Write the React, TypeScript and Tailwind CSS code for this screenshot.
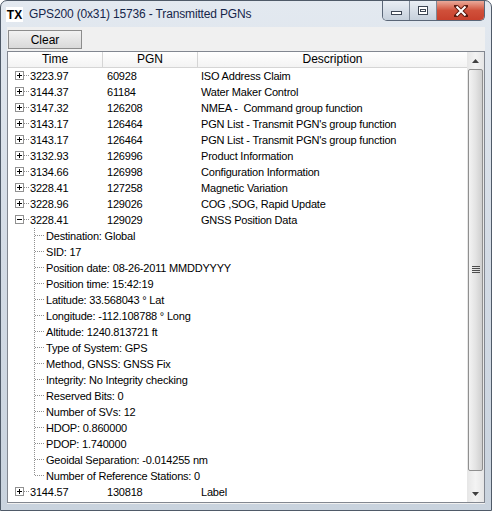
import React from "react";

const rows: [string, string, string][] = [
  ["3223.97", "60928", "ISO Address Claim"],
  ["3144.37", "61184", "Water Maker Control"],
  ["3147.32", "126208", "NMEA -  Command group function"],
  ["3143.17", "126464", "PGN List - Transmit PGN's group function"],
  ["3143.17", "126464", "PGN List - Transmit PGN's group function"],
  ["3132.93", "126996", "Product Information"],
  ["3134.66", "126998", "Configuration Information"],
  ["3228.41", "127258", "Magnetic Variation"],
  ["3228.96", "129026", "COG ,SOG, Rapid Update"],
];

const fields = [
  "Destination: Global",
  "SID: 17",
  "Position date: 08-26-2011 MMDDYYYY",
  "Position time: 15:42:19",
  "Latitude: 33.568043 ° Lat",
  "Longitude: -112.108788 ° Long",
  "Altitude: 1240.813721 ft",
  "Type of System: GPS",
  "Method, GNSS: GNSS Fix",
  "Integrity: No Integrity checking",
  "Reserved Bits: 0",
  "Number of SVs: 12",
  "HDOP: 0.860000",
  "PDOP: 1.740000",
  "Geoidal Separation: -0.014255 nm",
  "Number of Reference Stations: 0",
];

function ExpandBox({ open }: { open?: boolean }) {
  return (
    <svg width="22" height="16" viewBox="0 0 22 16" className="shrink-0">
      <rect x="7.5" y="3.5" width="8" height="8" fill="#fff" stroke="#919191" />
      <line x1="9" y1="7.5" x2="14" y2="7.5" stroke="#000" />
      {!open && <line x1="11.5" y1="5" x2="11.5" y2="10" stroke="#000" />}
      <line x1="16" y1="7.5" x2="22" y2="7.5" stroke="#909090" strokeDasharray="1 1" />
    </svg>
  );
}

function Branch({ last }: { last?: boolean }) {
  return (
    <svg width="12" height="16" viewBox="0 0 12 16" className="shrink-0">
      <line x1="0.5" y1="0" x2="0.5" y2={last ? 8 : 16} stroke="#909090" strokeDasharray="1 1" />
      <line x1="1" y1="7.5" x2="11" y2="7.5" stroke="#909090" strokeDasharray="1 1" />
    </svg>
  );
}

function Row({ r, open }: { r: [string, string, string]; open?: boolean }) {
  return (
    <div className="flex h-4 items-center">
      <div className="flex w-[95px] items-center">
        <ExpandBox open={open} />
        <span>{r[0]}</span>
      </div>
      <div className="w-[95px] pl-1">{r[1]}</div>
      <div className="whitespace-pre pl-[3px]">{r[2]}</div>
    </div>
  );
}

function CaptionButtons() {
  return (
    <div className="flex h-[20px] overflow-hidden rounded-b-[5px] border border-t-0 border-[#5a6677]">
      <div className="flex w-[27px] items-center justify-center border-r border-[#7d8896] bg-gradient-to-b from-[#e9eef4] to-[#c6d0dc]">
        <div className="mt-[5px] h-[4px] w-[11px] border border-[#3d4654] bg-white" />
      </div>
      <div className="flex w-[27px] items-center justify-center border-r border-[#7d8896] bg-gradient-to-b from-[#e9eef4] to-[#c6d0dc]">
        <div className="flex h-[9px] w-[10px] items-center justify-center border border-[#3d4654] bg-white">
          <div className="h-[3px] w-[6px] border border-[#3d4654]" />
        </div>
      </div>
      <div className="flex w-[47px] items-center justify-center bg-gradient-to-b from-[#e9a99a] via-[#d0503a] to-[#c8402c]">
        <svg width="14" height="12" viewBox="0 0 14 12">
          <path d="M2 1 L12 11 M12 1 L2 11" stroke="#5a1a10" strokeWidth="4" strokeLinecap="square" />
          <path d="M2.5 1.5 L11.5 10.5 M11.5 1.5 L2.5 10.5" stroke="#fff" strokeWidth="2" />
        </svg>
      </div>
    </div>
  );
}

export default function App() {
  return (
    <div className="h-[511px] w-[492px] overflow-hidden rounded-t-[7px] border border-[#4f5a68] bg-gradient-to-b from-[#e3e9f0] via-[#d3dbe5] to-[#c9d3de] font-['Liberation_Sans',Arial,sans-serif] text-[11px] tracking-[-0.2px] text-black">
      <div className="flex h-[26px] items-start">
        <div className="ml-[5px] mt-[6px] flex h-[15px] w-[17px] items-center justify-center bg-white text-[12px] font-bold leading-none tracking-normal">TX</div>
        <div className="ml-[6px] mt-[6px] text-[12px] leading-[15px] tracking-[-0.15px] text-[#16264a]">GPS200 (0x31) 15736 - Transmitted PGNs</div>
        <div className="ml-auto mr-[6px]">
          <CaptionButtons />
        </div>
      </div>
      <div className="mx-[6px] flex h-[477px] flex-col bg-[#f0f0f0]">
        <div className="flex h-[24px] items-start pt-[3px]">
          <button className="ml-px h-[19px] w-[74px] border border-[#8c8c8c] bg-gradient-to-b from-[#f2f2f2] to-[#d9d9d9] text-[12px] leading-none tracking-normal">Clear</button>
        </div>
        <div className="mb-px flex flex-1 border border-[#828790] bg-white">
          <div className="flex-1 overflow-hidden">
            <div className="flex h-[16px] border-b border-[#d5d5d5] bg-gradient-to-b from-white to-[#f3f3f3] text-[12px] leading-[15px] tracking-normal">
              <div className="w-[95px] border-r border-[#d5d5d5] text-center">Time</div>
              <div className="w-[95px] border-r border-[#d5d5d5] text-center">PGN</div>
              <div className="flex-1 text-center">Description</div>
            </div>
            {rows.map((r, i) => (
              <Row key={i} r={r} />
            ))}
            <Row r={["3228.41", "129029", "GNSS Position Data"]} open />
            {fields.map((f, i) => (
              <div key={i} className="flex h-4 items-center pl-[26px]">
                <Branch last={i === fields.length - 1} />
                <span>{f}</span>
              </div>
            ))}
            <Row r={["3144.57", "130818", "Label"]} />
          </div>
          <div className="flex w-[17px] flex-col bg-gradient-to-r from-[#e6e6e6] via-[#f3f3f3] to-[#e6e6e6]">
            <div className="flex h-[17px] items-center justify-center">
              <svg width="7" height="4" viewBox="0 0 7 4"><path d="M0 4 L3.5 0 L7 4Z" fill="#404040" /></svg>
            </div>
            <div className="mx-px flex h-[402px] items-center justify-center rounded-[2px] border border-[#8f8f8f] bg-gradient-to-r from-[#f3f3f3] via-[#e4e4e4] to-[#cfcfcf]">
              <svg width="8" height="8" viewBox="0 0 8 8">
                <path d="M0 0.5 H8 M0 2.5 H8 M0 4.5 H8 M0 6.5 H8" stroke="#4d4d4d" />
              </svg>
            </div>
            <div className="flex-1" />
            <div className="flex h-[17px] items-center justify-center">
              <svg width="7" height="4" viewBox="0 0 7 4"><path d="M0 0 L3.5 4 L7 0Z" fill="#404040" /></svg>
            </div>
          </div>
        </div>
      </div>
    </div>
  );
}
